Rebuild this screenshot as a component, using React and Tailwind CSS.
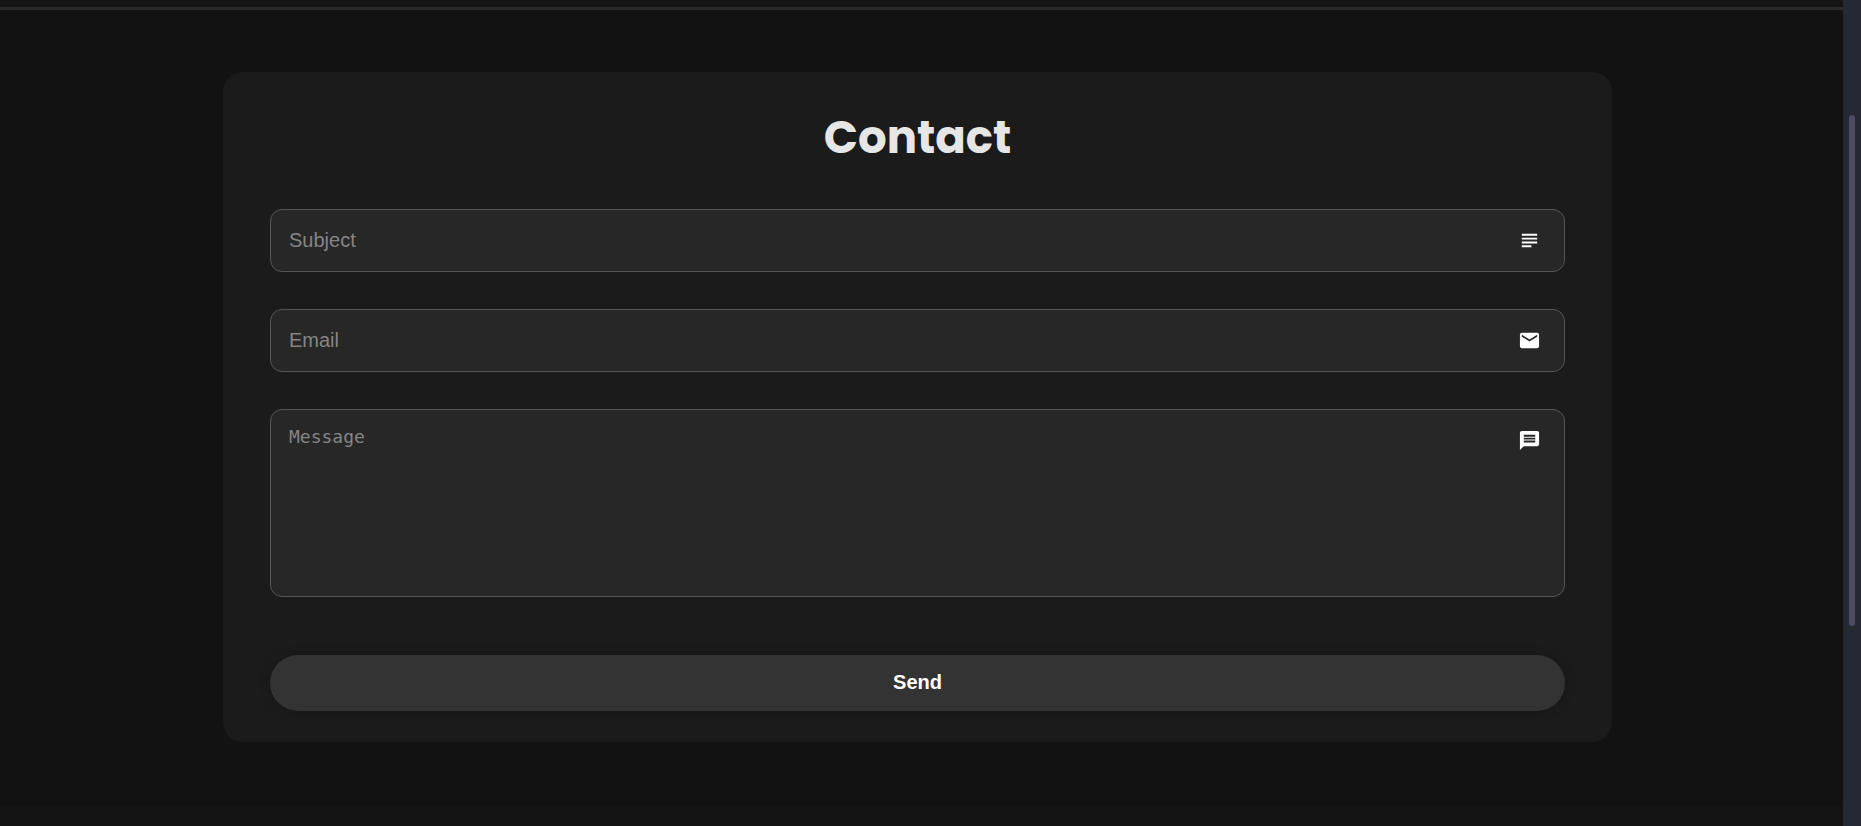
import { MdEmail, MdMessage, MdSubject } from "react-icons/md";

const fieldBox =
  "block w-full rounded-xl border border-[#555555] bg-[#272727] pl-[18px] pr-16 text-white placeholder:text-[#858585] placeholder:opacity-100 outline-none focus:border-[#888888]";

function Field({ id, label, icon: Icon, multiline = false, type = "text" }) {
  return (
    <div className="relative">
      {multiline ? (
        <textarea
          id={id}
          name={id}
          aria-label={label}
          placeholder={label}
          className={`${fieldBox} h-[188px] resize-none py-[15px] font-['DejaVu_Sans_Mono',monospace] text-[18px] leading-6`}
        />
      ) : (
        <input
          id={id}
          name={id}
          type={type}
          aria-label={label}
          placeholder={label}
          className={`${fieldBox} h-[63px] text-[20px]`}
        />
      )}
      <Icon
        aria-hidden="true"
        className="pointer-events-none absolute right-6 top-5 size-[23px] text-white"
      />
    </div>
  );
}

export default function App() {
  return (
    <div className="flex min-h-screen bg-[#121212] font-['Liberation_Sans',Arial,sans-serif]">
      <main className="flex min-w-0 flex-1 flex-col">
        <div className="h-[10px] border-b-[3px] border-[#2a2a2a] bg-[#141414]" />
        <section className="flex-1 pt-[62px] pr-8 pb-16 pl-6">
          <form
            className="mx-auto w-full max-w-[1389px] rounded-[20px] bg-[#1b1b1b] px-[47px] pt-[33px] pb-[31px]"
            onSubmit={(event) => event.preventDefault()}
          >
            <h1 className="text-center font-['Poppins','Inter',sans-serif] text-[45px] leading-[65px] font-bold text-[#e6e6e6]">
              Contact
            </h1>
            <div className="mt-[39px] flex flex-col gap-[37px]">
              <Field id="subject" label="Subject" icon={MdSubject} />
              <Field id="email" label="Email" icon={MdEmail} type="email" />
              <Field id="message" label="Message" icon={MdMessage} multiline />
            </div>
            <button
              type="submit"
              className="mt-[58px] h-14 w-full rounded-full bg-[#333333] pb-0.5 text-[20px] font-bold text-white shadow-[0_0_12px_rgba(0,0,0,0.2)]"
            >
              Send
            </button>
          </form>
        </section>
        <div className="h-[21px] bg-[#141414]" />
      </main>
      <div className="w-[18px] bg-[#252934] px-1.5 pt-[115px]">
        <div className="h-[511px] rounded-full bg-[#4b4c64]" />
      </div>
    </div>
  );
}
